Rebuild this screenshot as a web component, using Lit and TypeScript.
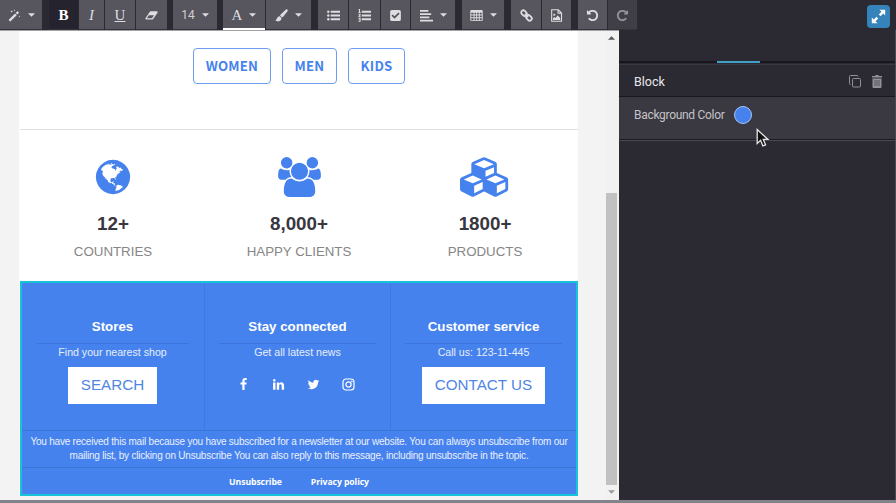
import { LitElement, html, css, svg } from "lit";
import { customElement } from "lit/decorators.js";

const FA: Record<string, [string, string]> = {
  globe: ["0 0 1792 1792", "M896 128q209 0 385.5 103t279.5 279.5 103 385.5-103 385.5-279.5 279.5-385.5 103-385.5-103-279.5-279.5-103-385.5 103-385.5 279.5-279.5 385.5-103zm274 521q-2 1-9.5 9.5t-13.5 9.5q2 0 4.5-5t5-11 3.5-7q6-7 22-15 14-6 52-12 34-8 51 11-2-2 9.5-13t14.5-12q3-2 15-4.5t15-7.5l2-22q-12 1-17.5-7t-6.5-21q0 2-6 8 0-7-4.5-8t-11.5 1-9 1q-10-3-15-7.5t-8-16.5-4-15q-2-5-9.5-11t-9.5-10q-1-2-2.5-5.5t-3-6.5-4-5.5-5.5-2.5-7 5-7.5 10-4.5 5q-3-2-6-1.5t-4.5 1-4.5 3-5 3.5q-3 2-8.5 3t-8.5 2q15-5-1-11-10-4-16-3 9-4 7.5-12t-8.5-14h5q-1-4-8.5-8.5t-17.5-8.5-13-6q-8-5-34-9.5t-33-.5q-5 6-4.5 10.5t4 14 3.5 12.5q1 6-5.5 13t-6.5 12q0 7 14 15.5t10 21.5q-3 8-16 16t-16 12q-5 8-1.5 18.5t10.5 16.5q2 2 1.5 4t-3.5 4.5-5.5 4-6.5 3.5l-3 2q-11 5-20.5-6t-13.5-26q-7-25-16-30-23-8-29 1-5-13-41-26-25-9-58-4 6-1 0-15-7-15-19-12 3-6 4-17.5t1-13.5q3-13 12-23 1-1 7-8.5t9.5-13.5.5-6q35 4 50-11 5-5 11.5-17t10.5-17q9-6 14-5.5t14.5 5.5 14.5 5q14 1 15.5-11t-7.5-20q12 1 3-17-4-7-8-9-12-4-27 5-8 4 2 8-1-1-9.5 10.5t-16.5 17.5-16-5q-1-1-5.5-13.5t-9.5-13.5q-8 0-16 15 3-8-11-15t-24-8q19-12-8-27-7-4-20.5-5t-19.5 4q-5 7-5.5 11.5t5 8 10.5 5.5 11.5 4 8.5 3q14 10 8 14-2 1-8.5 3.5t-11.5 4.5-6 4q-3 4 0 14t-2 14q-5-5-9-17.5t-7-16.5q7 9-25 6l-10-1q-4 0-16 2t-20.5 1-13.5-8q-4-8 0-20 1-4 4-2-4-3-11-9.5t-10-8.5q-46 15-94 41 6 1 12-1 5-2 13-6.5t10-5.5q34-14 42-7l5-5q14 16 20 25-7-4-30-1-20 6-22 12 7 12 5 18-4-3-11.5-10t-14.5-11-15-5q-16 0-22 1-146 80-235 222 7 7 12 8 4 1 5 9t2.5 11 11.5-3q9 8 3 19 1-1 44 27 19 17 21 21 3 11-10 18-1-2-9-9t-9-4q-3 5 .5 18.5t10.5 12.5q-7 0-9.5 16t-2.5 35.5-1 23.5l2 1q-3 12 5.5 34.5t21.5 19.5q-13 3 20 43 6 8 8 9 3 2 12 7.5t15 10 10 10.5q4 5 10 22.5t14 23.5q-2 6 9.5 20t10.5 23q-1 0-2.5 1t-2.5 1q3 7 15.5 14t15.5 13q1 3 2 10t3 11 8 2q2-20-24-62-15-25-17-29-3-5-5.5-15.5t-4.5-14.5q2 0 6 1.5t8.5 3.5 7.5 4 2 3q-3 7 2 17.5t12 18.5 17 19 12 13q6 6 14 19.5t0 13.5q9 0 20 10.5t17 19.5q5 8 8 26t5 24q2 7 8.5 13.5t12.5 9.5l16 8 13 7q5 2 18.5 10.5t21.5 11.5q10 4 16 4t14.5-2.5 13.5-3.5q15-2 29 15t21 21q36 19 55 11-2 1 .5 7.5t8 15.5 9 14.5 5.5 8.5q5 6 18 15t18 15q6-4 7-9-3 8 7 20t18 10q14-3 14-32-31 15-49-18 0-1-2.5-5.5t-4-8.5-2.5-8.5 0-7.5 5-3q9 0 10-3.5t-2-12.5-4-13q-1-8-11-20t-12-15q-5 9-16 8t-16-9q0 1-1.5 5.5t-1.5 6.5q-13 0-15-1 1-3 2.5-17.5t3.5-22.5q1-4 5.5-12t7.5-14.5 4-12.5-4.5-9.5-17.5-2.5q-19 1-26 20-1 3-3 10.5t-5 11.5-9 7q-7 3-24 2t-24-5q-13-8-22.5-29t-9.5-37q0-10 2.5-26.5t3-25-5.5-24.5q3-2 9-9.5t10-10.5q2-1 4.5-1.5t4.5 0 4-1.5 3-6q-1-1-4-3-3-3-4-3 7 3 28.5-1.5t27.5 1.5q15 11 22-2 0-1-2.5-9.5t-.5-13.5q5 27 29 9 3 3 15.5 5t17.5 5q3 2 7 5.5t5.5 4.5 5-.5 8.5-6.5q10 14 12 24 11 40 19 44 7 3 11 2t4.5-9.5 0-14-1.5-12.5l-1-8v-18l-1-8q-15-3-18.5-12t1.5-18.5 15-18.5q1-1 8-3.5t15.5-6.5 12.5-8q21-19 15-35 7 0 11-9-1 0-5-3t-7.5-5-4.5-2q9-5 2-16 5-3 7.5-11t7.5-10q9 12 21 2 8-8 1-16 5-7 20.5-10.5t18.5-9.5q7 2 8-2t1-12 3-12q4-5 15-9t13-5l17-11q3-4 0-4 18 2 31-11 10-11-6-20 3-6-3-9.5t-15-5.5q3-1 11.5-.5t10.5-1.5q15-10-7-16-17-5-43 12zm-163 877q206-36 351-189-3-3-12.5-4.5t-12.5-3.5q-18-7-24-8 1-7-2.5-13t-8-9-12.5-8-11-7q-2-2-7-6t-7-5.500-7.500-4.500-8.500-2-10 1l-3 1q-3 1-5.500 2.500t-5.500 3-4 3 0 2.500q-21-17-36-22-5-1-11-5.500t-10.500-7-10-1.500-11.500 7q-5 5-6 15t-2 13q-7-5 0-17.500t2-18.500q-3-6-10.500-4.500t-12 4.500-11.500 8.500-9 6.500-8.500 5.500-8.500 7.500q-3 4-6 12t-5 11q-2-4-11.500-6.500t-9.500-5.500q2 10 4 35t5 38q7 31-12 48-27 25-29 40-4 22 12 26 0 7-8 20.500t-7 21.500q0 6 2 16z"],
  users: ["0 0 1920 1792", "M593 896q-162 5-265 128h-134q-82 0-138-40.5t-56-118.5q0-353 124-353 6 0 43.5 21t97.5 42.5 119 21.5q67 0 133-23-5 37-5 66 0 139 81 256zm1071 637q0 120-73 189.5t-194 69.5h-874q-121 0-194-69.5t-73-189.5q0-53 3.5-103.5t14-109 26.5-108.5 43-97.5 62-81 85.5-53.5 111.5-20q10 0 43 21.5t73 48 107 48 135 21.5 135-21.5 107-48 73-48 43-21.5q61 0 111.5 20t85.5 53.5 62 81 43 97.5 26.5 108.5 14 109 3.5 103.5zm-1024-1277q0 106-75 181t-181 75-181-75-75-181 75-181 181-75 181 75 75 181zm704 384q0 159-112.5 271.5t-271.5 112.5-271.5-112.5-112.5-271.5 112.5-271.5 271.5-112.5 271.5 112.5 112.5 271.5zm576 225q0 78-56 118.5t-138 40.5h-134q-103-123-265-128 81-117 81-256 0-29-5-66 66 23 133 23 59 0 119-21.5t97.5-42.5 43.5-21q124 0 124 353zm-128-609q0 106-75 181t-181 75-181-75-75-181 75-181 181-75 181 75 75 181z"],
  cubes: ["0 0 2304 1792", "M640 1632l384-192v-314l-384 164v342zm-64-454l404-173-404-173-404 173zm1088 454l384-192v-314l-384 164v342zm-64-454l404-173-404-173-404 173zm-448-293l384-165v-266l-384 164v267zm-64-379l441-189-441-189-441 189zm1088 518v416q0 36-19 67t-52 47l-448 224q-25 14-57 14t-57-14l-448-224q-4-2-7-4-2 2-7 4l-448 224q-25 14-57 14t-57-14l-448-224q-33-16-52-47t-19-67v-416q0-38 21.5-70t56.5-48l434-186v-400q0-38 21.5-70t56.5-48l448-192q23-10 50-10t50 10l448 192q35 16 56.5 48t21.5 70v400l434 186q36 16 57 48t21 70z"],
  facebook: ["0 0 1792 1792", "M1343 12v264h-157q-86 0-116 36t-30 108v189h293l-39 296h-254v759h-306v-759h-255v-296h255v-218q0-186 104-288.5t277-102.5q147 0 228 12z"],
  linkedin: ["0 0 1792 1792", "M477 625v991h-330v-991h330zm21-306q1 73-50.5 122t-135.5 49h-2q-82 0-132-49t-50-122q0-74 51.5-122.5t134.5-48.5 133 48.5 51 122.5zm1166 729v568h-329v-530q0-105-40.5-164.5t-126.5-59.5q-63 0-105.5 34.5t-63.5 85.5q-11 30-11 81v553h-329q2-399 2-647t-1-296l-1-48h329v144h-2q20-32 41-56t56.5-52 87-43.5 114.5-15.5q171 0 275 113.5t104 332.5z"],
  twitter: ["0 0 1792 1792", "M1684 408q-67 98-162 167 1 14 1 42 0 130-38 259.5t-115.5 248.5-184.5 210.5-258 146-323 54.5q-271 0-496-145 35 4 78 4 225 0 401-138-105-2-188-64.5t-114-159.5q33 5 61 5 43 0 85-11-112-23-185.5-111.5t-73.5-205.5v-4q68 38 146 41-66-44-105-115t-39-154q0-88 44-163 121 149 294.5 238.5t371.5 99.5q-8-38-8-74 0-134 94.5-228.5t228.5-94.5q140 0 236 102 109-21 205-78-37 115-142 178 93-10 186-50z"],
  undo: ["0 0 1792 1792", "M1664 896q0 156-61 298t-164 245-245 164-298 61q-172 0-327-72.5t-264-204.5q-7-10-6.5-22.5t8.5-20.5l137-138q10-9 25-9 16 2 23 12 73 95 179 147t225 52q104 0 198.5-40.5t163.5-109.5 109.5-163.5 40.5-198.5-40.5-198.5-109.5-163.5-163.5-109.5-198.5-40.5q-98 0-188 35.5t-160 101.5l137 138q31 30 14 69-17 40-59 40h-448q-26 0-45-19t-19-45v-448q0-42 40-59 39-17 69 14l130 129q107-101 244.5-156.5t284.5-55.5q156 0 298 61t245 164 164 245 61 298z"],
};

const fa = (name: string, cls: string) =>
  html`<svg class=${cls} viewBox=${FA[name][0]} fill="currentColor"><path d=${FA[name][1]} /></svg>`;
const glyph = (body: unknown) => html`<svg class="g" viewBox="0 0 14 14" fill="currentColor">${body}</svg>`;
const caret = html`<svg class="caret" viewBox="0 0 8 4" fill="currentColor"><path d="M0 0h8L4 4z" /></svg>`;

const ICONS = {
  wand: glyph(svg`<path d="M1 11.4l6.6-6.6 1.8 1.8-6.6 6.6q-.4.4-.8 0l-1-1q-.4-.4 0-.8zM8.2 4.200l1.600-1.600q.4-.4.8 0l1 1q.4.4 0 .8L10 6z"/><path d="M4 1l.4 1.100 1.100.4-1.100.4L4 4l-.4-1.100-1.100-.4 1.100-.4zM7 .2l.3.8.8.3-.8.3L7 2.400l-.3-.8-.8-.3.8-.3zM12.300 7l.3.8.8.3-.8.3-.3.8-.3-.8-.8-.3.8-.3z"/>`),
  eraser: glyph(svg`<path fill-rule="evenodd" d="M6.200 2.500h6.600q1.200.2.800 1.300L9 10.500q-.5.700-1.200.7H1.200Q0 11 .5 10l4.500-6.800q.4-.6 1.200-.7zM2 9.900h5.500l2.200-3.200H4.200z"/>`),
  brush: glyph(svg`<path d="M12.600.4q1.300.2 1.100 1.400-.1.500-.5 1L9 8.200Q8.200 9 7.300 8.800L5.600 7.300q-.2-.9.5-1.500L11.500.8q.6-.5 1.100-.4zM5 7.700l2 1.900q0 2.600-2 3.400-2.800 1.100-4.800-1.200 1.200 0 1.700-1.300Q2.800 7.400 5 7.700z"/>`),
  ul: glyph(svg`<circle cx="1.400" cy="3" r="1.300"/><circle cx="1.400" cy="7" r="1.300"/><circle cx="1.400" cy="11" r="1.300"/><path d="M4 2h10v2H4zM4 6h10v2H4zM4 10h10v2H4z"/>`),
  ol: glyph(svg`<path d="M1 0h1.200v3.400H3v.9H.5v-.9H1V1.200H.4zM.5 5.200h2.300v1.500L1.600 7.900h1.300v.9H.4V7.900L1.700 6.300H.5zM.5 9.700h2.300v4H.4v-.9h1.200v-.6H.8v-.8h.9v-.8H.5z"/><path d="M4 2h10v2H4zM4 6h10v2H4zM4 10h10v2H4z"/>`),
  check: glyph(svg`<path fill-rule="evenodd" d="M3.200 1h7.600q2 0 2 2v8q0 2-2 2H3.200q-2 0-2-2V3q0-2 2-2zM6 10.400l5.400-5.300-1.300-1.300L6 7.900 4 5.900 2.700 7.200z"/>`),
  align: glyph(svg`<path d="M0 1h9v2H0zM0 4.500h12v2H0zM0 8h10v2H0zM0 11.500h14v2H0z"/>`),
  table: glyph(svg`<path fill-rule="evenodd" d="M1.500 1h11q1.200 0 1.200 1.200v9.600q0 1.200-1.200 1.200h-11Q.3 13 .3 11.800V2.200Q.3 1 1.500 1zM1.300 4v2h2.600V4zm3.600 0v2h1.800V4zm2.800 0v2h1.800V4zm2.800 0v2h2.200V4zM1.300 7v2h2.600V7zm3.600 0v2h1.800V7zm2.800 0v2h1.800V7zm2.800 0v2h2.200V7zM1.300 10v2h2.600v-2zm3.600 0v2h1.800v-2zm2.800 0v2h1.800v-2zm2.800 0v2h2.200v-2z"/>`),
  link: glyph(svg`<g fill="none" stroke="currentColor" stroke-width="1.900"><rect x="1" y="2.200" width="6.600" height="4.600" rx="2.200" transform="rotate(45 4.300 4.500)"/><rect x="6.400" y="7.200" width="6.600" height="4.600" rx="2.200" transform="rotate(45 9.700 9.500)"/><path d="M5.300 5.300l3.400 3.400"/></g>`),
  image: glyph(svg`<path fill="none" stroke="currentColor" stroke-width="1.200" d="M1.800.8h7.200l3.400 3.400v9H1.800zM8.700.8v3.600h3.700"/><circle cx="4.600" cy="6.200" r="1.200"/><path d="M3.200 11.800V9.900l1.500-1.300 1 1L8.300 7l2.700 2.700v2.100z"/>`),
};

@customElement("app-root")
export class AppRoot extends LitElement {
  static styles = css`
    :host { display: flex; flex-direction: column; width: 896px; height: 503px; overflow: hidden; background: #2b2932; font-family: "Liberation Sans", Arial, sans-serif; }
    * { box-sizing: border-box; }
    svg { display: block; flex: none; }
    .top { display: flex; height: 30px; flex: none; }
    .group { display: flex; gap: 1px; margin-right: 7px; height: 30px; }
    .group.tight { margin-right: 6px; }
    .btn { display: flex; align-items: center; justify-content: center; background: #57555e; color: #dedde0; gap: 7px; height: 30px; border-bottom: 1px solid #35333c; padding-top: 1px; }
    .w25 { width: 25px; } .w29 { width: 29px; } .w30 { width: 30px; } .w31 { width: 31px; }
    .w42 { width: 42px; } .w44 { width: 44px; } .w45 { width: 45px; }
    .btn.on { background: #25232d; color: #fff; }
    .btn.off { background: #403f47; color: #94939a; }
    .btn.line { border-bottom: 2px solid #fff; padding-top: 2px; }
    .g { width: 13px; height: 13px; }
    .caret { width: 7px; height: 4px; margin-bottom: 1px; }
    .ser { font: 15px/20px "Liberation Serif", serif; }
    .bold { font-weight: 700; } .it { font-style: italic; } .un { text-decoration: underline; }
    .num { font: 12px/20px Roboto, sans-serif; color: #cfced2; }
    .flip { transform: scaleX(-1); }
    .expand { display: flex; align-items: center; justify-content: center; width: 23px; height: 23px; margin: 5px 6px 0 auto; border-radius: 4px; background: #3483bb; }
    .main { display: flex; height: 470px; }
    .stage { display: flex; width: 619px; background: #f3f3f3; border-top: 1px solid #a3a2a5; padding-left: 19px; }
    .mail { width: 559px; background: #fff; display: flex; flex-direction: column; padding-left: 1px; margin-right: 28px; height: 465px; }
    .cats { display: flex; height: 99px; justify-content: center; padding-top: 16.500px; gap: 11px; border-bottom: 1px solid #dfdfdf; }
    .cat { height: 36px; border: 1px solid #6f9cf0; border-radius: 4px; color: #4682ed; font: 700 13.200px/34px "Noto Sans CJK SC", sans-serif; text-align: center; letter-spacing: .2px; }
    .c1 { width: 78px; } .c2 { width: 55px; } .c3 { width: 57px; }
    .stats { display: grid; grid-template-columns: repeat(3, 1fr); height: 151px; }
    .stat { display: flex; flex-direction: column; align-items: center; padding-top: 27px; color: #4682ed; }
    .s1 { width: 40px; height: 40px; } .s2 { width: 43px; height: 40px; } .s3 { width: 51px; height: 40px; }
    .n { font-weight: 700; font-size: 18.8px; line-height: 24px; margin-top: 15px; color: #38363f; }
    .l { font-size: 13.3px; line-height: 18px; margin-top: 7px; color: #858585; }
    .foot { width: 558px; height: 215px; border: 2px solid #17c3d6; background: #4682ed; color: #fff; display: flex; flex-direction: column; }
    .cols { display: grid; grid-template-columns: 182px 186px 1fr; height: 148px; border-bottom: 1px solid #3d74d8; }
    .col { display: flex; flex-direction: column; align-items: center; padding: 35px 14px 0; border-left: 1px solid #3f78de; }
    .col:first-child { border-left: 0; padding-right: 15px; }
    .h { font-weight: 700; font-size: 13.3px; line-height: 18px; height: 26px; align-self: stretch; text-align: center; border-bottom: 1px solid #3d75da; }
    .p { font-size: 10.6px; line-height: 14px; margin-top: 1px; color: #e6eefc; }
    .cta { background: #fff; color: #4f86e4; height: 37px; margin-top: 8px; font-size: 15.200px; line-height: 36px; text-align: center; }
    .b1 { width: 89px; } .b2 { width: 123px; }
    .soc { display: flex; gap: 22px; margin: 19px 3px 0 0; }
    .so { width: 13px; height: 13px; }
    .legal { font-size: 10px; letter-spacing: -.215px; line-height: 14.300px; height: 37px; padding-top: 4px; text-align: center; border-bottom: 1px solid #3d74d8; color: #e9f0fd; white-space: nowrap; }
    .links { display: flex; justify-content: center; gap: 29px; font: 700 8.700px/12px "Open Sans", sans-serif; letter-spacing: -.1px; padding-top: 8px; }
    .bar { width: 13px; background: #f1f1f1; display: flex; flex-direction: column; align-items: flex-start; }
    .thumb { width: 11px; height: 292px; background: #c1c1c1; margin-top: 153px; }
    .ar { width: 7px; height: 4px; margin: 5px 0 0 2px; color: #555; }
    .ar.dn { color: #999; transform: rotate(180deg); }
    .side { width: 277px; border-right: 1px solid #4a4851; font-family: Roboto, sans-serif; }
    .tabs { height: 33px; border-bottom: 2px solid #18161f; display: flex; align-items: flex-end; }
    .tab { width: 43px; height: 2px; margin: 0 0 -2px 98px; background: #419fc8; }
    .head { display: flex; align-items: center; height: 33px; padding: 2px 12px 0 15px; border-top: 1px solid #3a3841; margin-top: 1px; color: #e8e8ea; font-size: 12.500px; gap: 10px; border-bottom: 1px solid #191820; }
    .head span { flex: 1; }
    .i { width: 12px; height: 13px; color: #929197; }
    .row { display: flex; height: 43px; padding: 9px 0 0 15px; background: #3a3840; border-bottom: 1px solid #1c1a23; box-shadow: 0 1px #4b4952; color: #c4c3c8; font-size: 12px; letter-spacing: -.3px; line-height: 18px; position: relative; gap: 10px; }
    .dot { width: 18px; height: 18px; border-radius: 50%; background: #4682ed; border: 1px solid #a9c3f4; }
    .cur { position: absolute; left: 137px; top: 31px; width: 14px; height: 20px; }
    .base { height: 3px; background: #85838a; }
  `;

  render() {
    return html`
      <div class="top">
        <div class="group"><div class="btn w42">${ICONS.wand}${caret}</div></div>
        <div class="group tight">
          <div class="btn on w29"><span class="ser bold">B</span></div>
          <div class="btn w25"><span class="ser it">I</span></div>
          <div class="btn w30"><span class="ser un">U</span></div>
          <div class="btn w31">${ICONS.eraser}</div>
        </div>
        <div class="group tight"><div class="btn w44"><span class="num">14</span>${caret}</div></div>
        <div class="group">
          <div class="btn line w42"><span class="ser">A</span>${caret}</div>
          <div class="btn w45">${ICONS.brush}${caret}</div>
        </div>
        <div class="group">
          <div class="btn w30">${ICONS.ul}</div>
          <div class="btn w31">${ICONS.ol}</div>
          <div class="btn w29">${ICONS.check}</div>
          <div class="btn w44">${ICONS.align}${caret}</div>
        </div>
        <div class="group"><div class="btn w42">${ICONS.table}${caret}</div></div>
        <div class="group">
          <div class="btn w30">${ICONS.link}</div>
          <div class="btn w29">${ICONS.image}</div>
        </div>
        <div class="group">
          <div class="btn w29">${fa("undo", "g")}</div>
          <div class="btn off w29">${fa("undo", "g flip")}</div>
        </div>
        <div class="expand">
          <svg width="15" height="15" viewBox="0 0 15 15" fill="#fff"><path d="M8.500.8h5.700v5.700l-2-2-2.700 2.700-1.700-1.700 2.700-2.700zM6.500 14.200H.8V8.500l2 2 2.700-2.700 1.700 1.700-2.700 2.700z" /></svg>
        </div>
      </div>
      <div class="main">
        <div class="stage">
          <div class="mail">
            <div class="cats">
              <div class="cat c1">WOMEN</div><div class="cat c2">MEN</div><div class="cat c3">KIDS</div>
            </div>
            <div class="stats">
              <div class="stat">${fa("globe", "s1")}<div class="n">12+</div><div class="l">COUNTRIES</div></div>
              <div class="stat">${fa("users", "s2")}<div class="n">8,000+</div><div class="l">HAPPY CLIENTS</div></div>
              <div class="stat">${fa("cubes", "s3")}<div class="n">1800+</div><div class="l">PRODUCTS</div></div>
            </div>
            <div class="foot">
              <div class="cols">
                <div class="col"><div class="h">Stores</div><div class="p">Find your nearest shop</div><div class="cta b1">SEARCH</div></div>
                <div class="col">
                  <div class="h">Stay connected</div><div class="p">Get all latest news</div>
                  <div class="soc">
                    ${fa("facebook", "so")}${fa("linkedin", "so")}${fa("twitter", "so")}
                    <svg class="so" viewBox="0 0 13 13" fill="none" stroke="currentColor" stroke-width="1.200"><rect x="1" y="1" width="11" height="11" rx="3" /><circle cx="6.500" cy="6.500" r="2.600" /><circle cx="9.700" cy="3.400" r=".3" /></svg>
                  </div>
                </div>
                <div class="col"><div class="h">Customer service</div><div class="p">Call us: 123-11-445</div><div class="cta b2">CONTACT US</div></div>
              </div>
              <div class="legal">You have received this mail because you have subscribed for a newsletter at our website. You can always unsubscribe from our<br />mailing list, by clicking on Unsubscribe You can also reply to this message, including unsubscribe in the topic.</div>
              <div class="links"><span>Unsubscribe</span><span>Privacy policy</span></div>
            </div>
          </div>
          <div class="bar">
            <svg class="ar" viewBox="0 0 8 4" fill="currentColor"><path d="M0 4h8L4 0z" /></svg>
            <div class="thumb"></div>
            <svg class="ar dn" viewBox="0 0 8 4" fill="currentColor"><path d="M0 4h8L4 0z" /></svg>
          </div>
        </div>
        <div class="side">
          <div class="tabs"><div class="tab"></div></div>
          <div class="head">
            <span>Block</span>
            <svg class="i" viewBox="0 0 12 13" fill="none" stroke="currentColor"><rect x="3.500" y="3.500" width="8" height="8.500" rx="1" /><path d="M1.500 9.500q-1 0-1-1v-7q0-1 1-1h6.500q1 0 1 1" /></svg>
            <svg class="i" viewBox="0 0 12 13"><path fill="currentColor" d="M4 1l.7-1h2.600L8 1h3v1.500H1V1zM1.500 3.500h9V12q0 1-1 1h-7q-1 0-1-1z" /><path stroke="#2b2932" stroke-width=".6" d="M4 5v6M6 5v6M8 5v6" /></svg>
          </div>
          <div class="row">
            <span>Background Color</span><div class="dot"></div>
            <svg class="cur" viewBox="0 0 14 20"><path d="M1.200 1.500v14l3.400-3.200 2.300 5.600 2.700-1.100-2.300-5.400h4.600z" fill="#111" stroke="#e6e6e8" stroke-width="1.300" /></svg>
          </div>
        </div>
      </div>
      <div class="base"></div>
    `;
  }
}
